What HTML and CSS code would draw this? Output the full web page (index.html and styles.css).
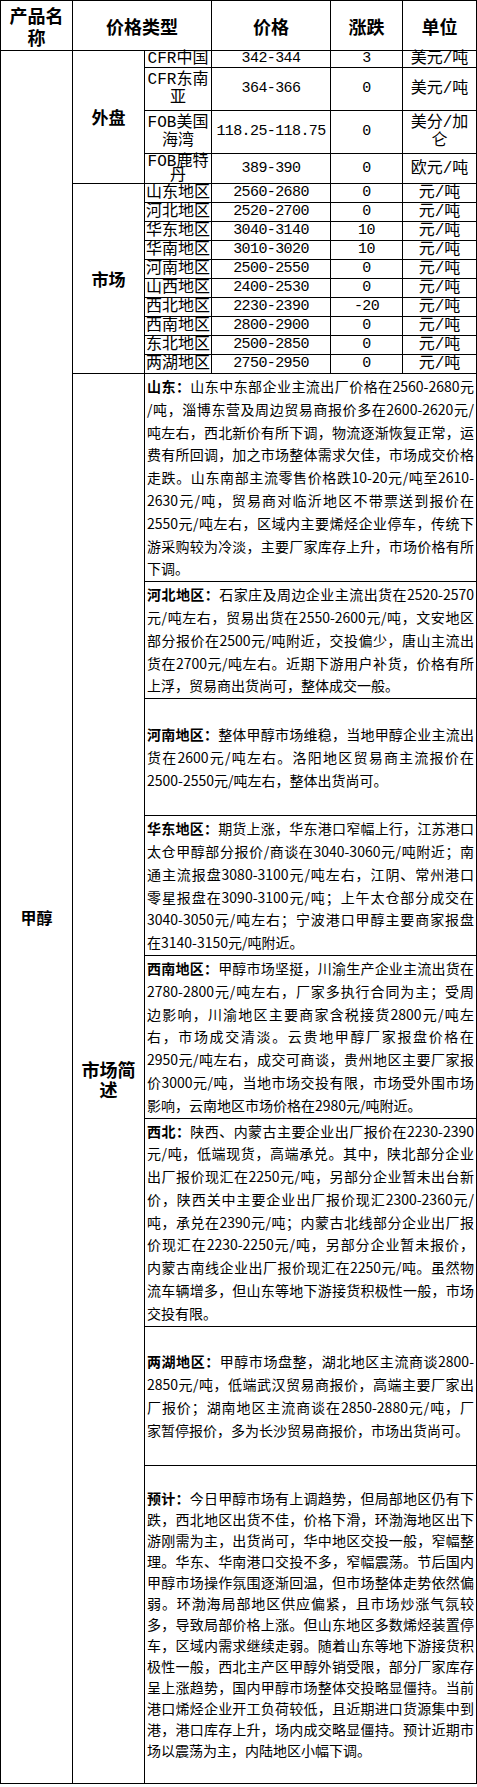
FILE: index.html
```html
<!DOCTYPE html>
<html lang="zh-CN">
<head>
<meta charset="utf-8">
<title>甲醇价格</title>
<link rel="stylesheet" href="styles.css">
</head>
<body>
<table class="report">
  <colgroup>
    <col class="c-product"><col class="c-group"><col class="c-name"><col class="c-price"><col class="c-change"><col class="c-unit">
  </colgroup>
  <tr class="head">
    <th>产品名称</th>
    <th colspan="2">价格类型</th>
    <th>价格</th>
    <th>涨跌</th>
    <th>单位</th>
  </tr>
  <tr class="r-single">
    <td rowspan="22" class="product">甲醇</td>
    <td rowspan="4" class="label">外盘</td>
    <td>CFR中国</td><td class="num">342-344</td><td class="num">3</td><td>美元/吨</td>
  </tr>
  <tr class="r-tall">
    <td>CFR东南亚</td><td class="num">364-366</td><td class="num">0</td><td>美元/吨</td>
  </tr>
  <tr class="r-tall">
    <td>FOB美国海湾</td><td class="num">118.25-118.75</td><td class="num">0</td><td>美分/加仑</td>
  </tr>
  <tr class="r-mid">
    <td class="tight">FOB鹿特丹</td><td class="num">389-390</td><td class="num">0</td><td>欧元/吨</td>
  </tr>
  <tr>
    <td rowspan="10" class="label">市场</td>
    <td>山东地区</td><td class="num">2560-2680</td><td class="num">0</td><td>元/吨</td>
  </tr>
  <tr><td>河北地区</td><td class="num">2520-2700</td><td class="num">0</td><td>元/吨</td></tr>
  <tr><td>华东地区</td><td class="num">3040-3140</td><td class="num">10</td><td>元/吨</td></tr>
  <tr><td>华南地区</td><td class="num">3010-3020</td><td class="num">10</td><td>元/吨</td></tr>
  <tr><td>河南地区</td><td class="num">2500-2550</td><td class="num">0</td><td>元/吨</td></tr>
  <tr><td>山西地区</td><td class="num">2400-2530</td><td class="num">0</td><td>元/吨</td></tr>
  <tr><td>西北地区</td><td class="num">2230-2390</td><td class="num">-20</td><td>元/吨</td></tr>
  <tr><td>西南地区</td><td class="num">2800-2900</td><td class="num">0</td><td>元/吨</td></tr>
  <tr><td>东北地区</td><td class="num">2500-2850</td><td class="num">0</td><td>元/吨</td></tr>
  <tr><td>两湖地区</td><td class="num">2750-2950</td><td class="num">0</td><td>元/吨</td></tr>
  <tr>
    <td rowspan="8" class="section">市场简述</td>
    <td colspan="4" class="desc">
      <p><b>山东：</b>山东中东部企业主流出厂价格在2560-2680元<br>/吨，淄博东营及周边贸易商报价多在2600-2620元/<br>吨左右，西北新价有所下调，物流逐渐恢复正常，运<br>费有所回调，加之市场整体需求欠佳，市场成交价格<br>走跌。山东南部主流零售价格跌10-20元/吨至2610-<br>2630元/吨，贸易商对临沂地区不带票送到报价在<br>2550元/吨左右，区域内主要烯烃企业停车，传统下<br>游采购较为冷淡，主要厂家库存上升，市场价格有所<span class="tail">下调。</span></p>
    </td>
  </tr>
  <tr>
    <td colspan="4" class="desc">
      <p><b>河北地区：</b>石家庄及周边企业主流出货在2520-2570<br>元/吨左右，贸易出货在2550-2600元/吨，文安地区<br>部分报价在2500元/吨附近，交投偏少，唐山主流出<br>货在2700元/吨左右。近期下游用户补货，价格有所<span class="tail">上浮，贸易商出货尚可，整体成交一般。</span></p>
    </td>
  </tr>
  <tr>
    <td colspan="4" class="desc">
      <p class="blank">&nbsp;</p>
      <p><b>河南地区：</b>整体甲醇市场维稳，当地甲醇企业主流出<br>货在2600元/吨左右。洛阳地区贸易商主流报价在<span class="tail">2500-2550元/吨左右，整体出货尚可。</span></p>
      <p class="blank">&nbsp;</p>
    </td>
  </tr>
  <tr>
    <td colspan="4" class="desc">
      <p><b>华东地区：</b>期货上涨，华东港口窄幅上行，江苏港口<br>太仓甲醇部分报价/商谈在3040-3060元/吨附近；南<br>通主流报盘3080-3100元/吨左右，江阴、常州港口<br>零星报盘在3090-3100元/吨；上午太仓部分成交在<br>3040-3050元/吨左右；宁波港口甲醇主要商家报盘<span class="tail">在3140-3150元/吨附近。</span></p>
    </td>
  </tr>
  <tr>
    <td colspan="4" class="desc">
      <p><b>西南地区：</b>甲醇市场坚挺，川渝生产企业主流出货在<br>2780-2800元/吨左右，厂家多执行合同为主；受周<br>边影响，川渝地区主要商家含税接货2800元/吨左<br>右，市场成交清淡。云贵地甲醇厂家报盘价格在<br>2950元/吨左右，成交可商谈，贵州地区主要厂家报<br>价3000元/吨，当地市场交投有限，市场受外围市场<span class="tail">影响，云南地区市场价格在2980元/吨附近。</span></p>
    </td>
  </tr>
  <tr>
    <td colspan="4" class="desc">
      <p><b>西北：</b>陕西、内蒙古主要企业出厂报价在2230-2390<br>元/吨，低端现货，高端承兑。其中，陕北部分企业<br>出厂报价现汇在2250元/吨，另部分企业暂未出台新<br>价，陕西关中主要企业出厂报价现汇2300-2360元/<br>吨，承兑在2390元/吨；内蒙古北线部分企业出厂报<br>价现汇在2230-2250元/吨，另部分企业暂未报价，<br>内蒙古南线企业出厂报价现汇在2250元/吨。虽然物<br>流车辆增多，但山东等地下游接货积极性一般，市场<span class="tail">交投有限。</span></p>
    </td>
  </tr>
  <tr>
    <td colspan="4" class="desc">
      <p class="blank">&nbsp;</p>
      <p><b>两湖地区：</b>甲醇市场盘整，湖北地区主流商谈2800-<br>2850元/吨，低端武汉贸易商报价，高端主要厂家出<br>厂报价；湖南地区主流商谈在2850-2880元/吨，厂<span class="tail">家暂停报价，多为长沙贸易商报价，市场出货尚可。</span></p>
      <p class="blank">&nbsp;</p>
    </td>
  </tr>
  <tr>
    <td colspan="4" class="desc forecast">
      <p class="blank">&nbsp;</p>
      <p><b>预计：</b>今日甲醇市场有上调趋势，但局部地区仍有下<br>跌，西北地区出货不佳，价格下滑，环渤海地区出下<br>游刚需为主，出货尚可，华中地区交投一般，窄幅整<br>理。华东、华南港口交投不多，窄幅震荡。节后国内<br>甲醇市场操作氛围逐渐回温，但市场整体走势依然偏<br>弱。环渤海局部地区供应偏紧，且市场炒涨气氛较<br>多，导致局部价格上涨。但山东地区多数烯烃装置停<br>车，区域内需求继续走弱。随着山东等地下游接货积<br>极性一般，西北主产区甲醇外销受限，部分厂家库存<br>呈上涨趋势，国内甲醇市场整体交投略显僵持。当前<br>港口烯烃企业开工负荷较低，且近期进口货源集中到<br>港，港口库存上升，场内成交略显僵持。预计近期市<span class="tail">场以震荡为主，内陆地区小幅下调。</span></p>
      <p class="blank">&nbsp;</p>
    </td>
  </tr>
</table>
</body>
</html>
```

FILE: styles.css
```css
html, body {
  margin: 0;
  padding: 0;
  background: #ffffff;
  color: #000000;
}

.report {
  border-collapse: collapse;
  table-layout: fixed;
  width: 476px;
  font-family: "Liberation Mono", "Noto Sans CJK SC", monospace;
  font-size: 16px;
  color: #000000;
}

.c-product { width: 72px; }
.c-group { width: 72px; }
.c-name { width: 67px; }
.c-price { width: 119px; }
.c-change { width: 72px; }
.c-unit { width: 74px; }

.report th,
.report td {
  border: 1px solid #000000;
  padding: 0 1px;
  text-align: center;
  vertical-align: middle;
  line-height: 18px;
  font-weight: 400;
}

.report .head th {
  font-family: "Noto Sans CJK SC", sans-serif;
  font-size: 18px;
  font-weight: 700;
  line-height: 22px;
}

.head { height: 50px; }
.r-single { height: 17px; }
.r-single td { line-height: 16px; }
.r-tall { height: 43px; }
.r-mid { height: 30px; }

.report td.tight { line-height: 14px; }

.report td.num {
  font-size: 15px;
  letter-spacing: -0.6px;
}

.report td.label,
.report td.product,
.report td.section {
  font-family: "Noto Sans CJK SC", sans-serif;
  font-weight: 700;
}

.report td.label { font-size: 17px; }
.report td.product { font-size: 16px; }
.report td.section { font-size: 18px; line-height: 20px; }

.report td.desc {
  text-align: left;
  vertical-align: top;
  padding: 1px 2px;
  font-family: "Noto Sans CJK SC", sans-serif;
  font-size: 14px;
  line-height: 22.8px;
}

.report td.forecast { line-height: 21px; }

.desc p {
  margin: 0;
  text-align: justify;
  text-align-last: justify;
}

.desc b { font-weight: 700; }

.desc .tail {
  display: block;
  text-align-last: left;
}
```
